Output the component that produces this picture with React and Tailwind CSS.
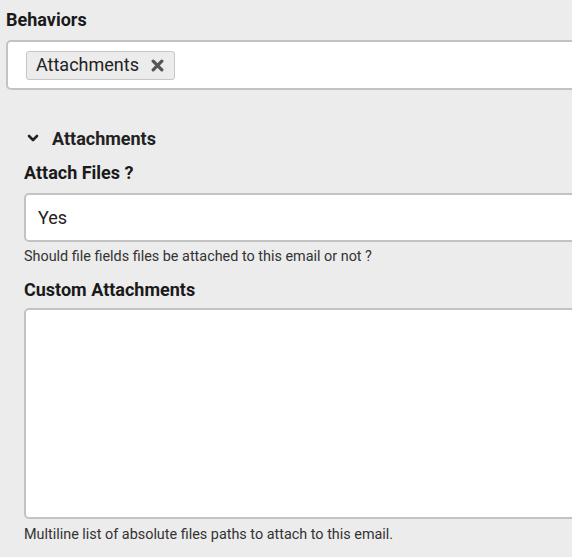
import React from "react";

const ChevronDown = () => (
  <svg width="12" height="12" viewBox="0 0 12 12" className="text-[#222]">
    <path d="M2 4 L6 8 L10 4" fill="none" stroke="currentColor" strokeWidth="2.6" strokeLinecap="round" strokeLinejoin="round" />
  </svg>
);

const Cross = () => (
  <svg width="13" height="13" viewBox="0 0 12 12" className="text-[#555]">
    <path d="M2 2 L10 10 M10 2 L2 10" fill="none" stroke="currentColor" strokeWidth="3" strokeLinecap="round" />
  </svg>
);

export default function App() {
  return (
    <div className="w-[572px] h-[557px] overflow-hidden bg-[#ececec] font-['Roboto',sans-serif] text-[#1a1a1a]">
      <div className="pt-[10px] pl-[6px]">
        <div className="text-[18px] font-bold leading-[20px]">Behaviors</div>
        <div className="mt-[10px] w-[620px] h-[50px] bg-white border-2 border-[#c3c3c3] rounded-[5px] flex items-center pl-[18px]">
          <div className="flex items-center h-[29px] pl-[9px] pr-[10px] bg-[#ececec] border border-[#c6c6c6] rounded-[3px] gap-[12px]">
            <span className="text-[18px] leading-none text-[#222]">Attachments</span>
            <Cross />
          </div>
        </div>
      </div>

      <div className="pl-[24px]">
        <div className="mt-[37px] flex items-center gap-[13px] pl-[3px] h-[22px]">
          <ChevronDown />
          <span className="text-[18px] font-bold text-[#222]">Attachments</span>
        </div>

        <div className="mt-[14px] text-[18px] font-bold leading-[20px]">Attach Files ?</div>
        <div className="mt-[10px] w-[620px] h-[49px] bg-white border-2 border-[#c3c3c3] rounded-[5px] flex items-center pl-[12px]">
          <span className="text-[18px] text-[#222]">Yes</span>
        </div>
        <div className="mt-[7px] text-[14.4px] leading-[16px] text-[#333]">
          Should file fields files be attached to this email or not ?
        </div>

        <div className="mt-[15px] text-[18px] font-bold leading-[20px]">Custom Attachments</div>
        <div className="mt-[8px] w-[620px] h-[211px] bg-white border-2 border-[#c3c3c3] rounded-[5px]" />
        <div className="mt-[8px] text-[14.4px] leading-[16px] text-[#333]">
          Multiline list of absolute files paths to attach to this email.
        </div>
      </div>
    </div>
  );
}
